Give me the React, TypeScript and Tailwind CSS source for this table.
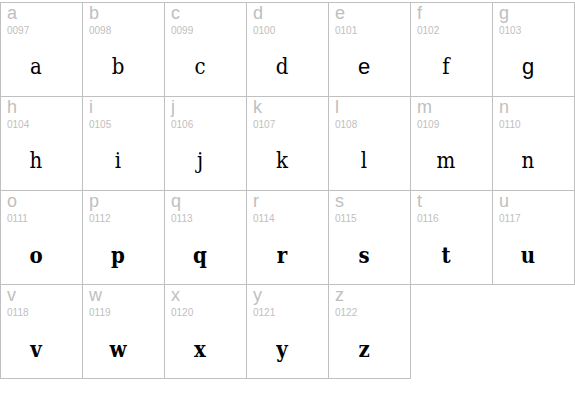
const glyphs = 'abcdefghijklmnopqrstuvwxyz'.split('');

// letters that render in a plain sans in the reference
const sansGlyphs = ['e', 'g'];
const boldFrom = 'o';

function GlyphCell({ ch }: { ch: string }) {
	const code = ch.charCodeAt(0).toString().padStart(4, '0');
	const isSans = sansGlyphs.includes(ch);
	const isBold = ch >= boldFrom;

	return (
		<div className="w-[82px] h-[94px] border-r border-b border-[#c0c0c0] flex flex-col">
			<div className="pl-[6px] pt-[1px] text-[#c0c0c0] font-['Liberation_Sans',Arial,sans-serif]">
				<div className="text-[18px] leading-[19px]">{ch}</div>
				<div className="text-[10px] leading-[12px] mt-[2px]">{code}</div>
			</div>
			<div
				className={
					'flex justify-center pr-[11px] mt-[17px] text-[22px] leading-[26px] text-black ' +
					(isSans
						? "font-['Liberation_Sans',Arial,sans-serif] "
						: "font-['DejaVu_Serif_Condensed','DejaVu_Serif',serif] ") +
					(isBold ? 'font-bold' : 'font-normal')
				}
			>
				{ch}
			</div>
		</div>
	);
}

export default function App() {
	return (
		<div className="w-[575px] h-[414px] bg-white pt-[2px]">
			<div className="grid grid-cols-[repeat(7,82px)] border-l border-t border-[#c0c0c0] w-[575px]">
				{glyphs.map((ch) => (
					<GlyphCell key={ch} ch={ch} />
				))}
			</div>
		</div>
	);
}
